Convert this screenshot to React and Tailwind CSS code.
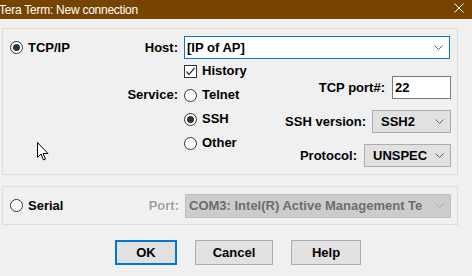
import React from 'react';

// 单选按钮
function Radio({ checked }) {
  return (
    <span className="flex h-[13px] w-[13px] shrink-0 items-center justify-center rounded-full border border-[#333333] bg-white">
      {checked && <span className="h-[7px] w-[7px] rounded-full bg-[#333333]" />}
    </span>
  );
}

function Checkbox({ checked }) {
  return (
    <span className="flex h-[13px] w-[13px] shrink-0 items-center justify-center border border-[#333333] bg-white">
      {checked && (
        <svg width="11" height="11" viewBox="0 0 11 11">
          <path d="M1.5 5.5 L4 8.5 L9.5 2" fill="none" stroke="#333333" strokeWidth="1.2" />
        </svg>
      )}
    </span>
  );
}

function Chevron({ color = '#606060' }) {
  return (
    <svg width="9" height="5" viewBox="0 0 9 5" className="shrink-0">
      <path d="M0.5 0.5 L4.5 4.5 L8.5 0.5" fill="none" stroke={color} />
    </svg>
  );
}

function Select({ value, width }) {
  return (
    <div
      className="flex h-[23px] items-center justify-between border border-[#adadad] bg-[#e1e1e1] pl-[8px] pr-[6px]"
      style={{ width }}
    >
      <span>{value}</span>
      <Chevron />
    </div>
  );
}

function Button({ label, width, primary }) {
  return (
    <div
      className={
        primary
          ? 'flex h-[25px] items-center justify-center border-2 border-[#0078d7] bg-[#e1e1e1]'
          : 'flex h-[25px] items-center justify-center border border-[#adadad] bg-[#e1e1e1]'
      }
      style={{ width }}
    >
      {label}
    </div>
  );
}

export default function App() {
  return (
    <div className="relative h-[276px] w-[472px] overflow-hidden bg-[#f0f0f0] font-['Liberation_Sans',Arial,sans-serif] text-[13px] font-bold text-black">
      {/* 标题栏 */}
      <div className="flex h-[19px] items-center justify-between bg-[#774400] pr-[8px] text-white">
        <span className="-ml-[1px] text-[12px] font-normal tracking-[-0.25px]">Tera Term: New connection</span>
        <svg width="10" height="10" viewBox="0 0 10 10" className="-mt-[3px]">
          <path d="M0.5 0.5 L9.5 9.5 M9.5 0.5 L0.5 9.5" stroke="#ffffff" strokeWidth="1" />
        </svg>
      </div>

      {/* TCP/IP 分组 */}
      <div className="ml-[2px] mt-[9px] flex h-[147px] w-[456px] flex-col border border-[#dcdcdc]">
        <div className="mt-[7px] flex h-[23px] items-center">
          <div className="flex w-[181px] items-center justify-between pl-[7px] pr-[6px]">
            <span className="flex items-center gap-[5px]">
              <Radio checked />
              TCP/IP
            </span>
            <span>Host:</span>
          </div>
          <div className="flex h-[23px] w-[266px] items-center justify-between border border-[#0078d7] bg-white pl-[2px] pr-[6px]">
            <span>[IP of AP]</span>
            <Chevron />
          </div>
        </div>

        <div className="flex flex-1">
          <div className="flex w-[181px] flex-col items-end pr-[6px]">
            <div className="h-[24px]" />
            <div className="flex h-[24px] items-center">Service:</div>
          </div>
          <div className="flex flex-col">
            <div className="flex h-[24px] items-center gap-[5px]">
              <Checkbox checked />
              History
            </div>
            <div className="flex h-[24px] items-center gap-[5px]">
              <Radio />
              Telnet
            </div>
            <div className="flex h-[24px] items-center gap-[5px]">
              <Radio checked />
              SSH
            </div>
            <div className="flex h-[24px] items-center gap-[5px]">
              <Radio />
              Other
            </div>
          </div>
          <div className="flex flex-1 flex-col items-end gap-[11px] pr-[6px] pt-[17px]">
            <div className="flex items-center gap-[7px]">
              <span>TCP port#:</span>
              <div className="flex h-[23px] w-[59px] items-center border border-[#7a7a7a] bg-white pl-[2px]">22</div>
            </div>
            <div className="flex items-center gap-[6px]">
              <span>SSH version:</span>
              <Select value="SSH2" width={79} />
            </div>
            <div className="flex items-center gap-[7px]">
              <span>Protocol:</span>
              <Select value="UNSPEC" width={87} />
            </div>
          </div>
        </div>
      </div>

      {/* Serial 分组 */}
      <div className="ml-[2px] mt-[11px] flex h-[39px] w-[456px] items-center border border-[#dcdcdc] pl-[7px] pr-[6px]">
        <span className="flex items-center gap-[5px]">
          <Radio />
          Serial
        </span>
        <span className="ml-auto mr-[6px] text-[#a0a0a0] [text-shadow:1px_1px_0_#ffffff]">Port:</span>
        <div className="flex h-[24px] w-[266px] items-center justify-between overflow-hidden border border-[#bfbfbf] bg-[#cccccc] pl-[3px] pr-[6px] text-[#6d6d6d]">
          <span className="whitespace-nowrap">COM3: Intel(R) Active Management Te</span>
          <Chevron color="#a8a8a8" />
        </div>
      </div>

      {/* 按钮 */}
      <div className="mt-[15px] flex gap-[18px] pl-[115px]">
        <Button label="OK" width={62} primary />
        <Button label="Cancel" width={78} />
        <Button label="Help" width={70} />
      </div>

      {/* 鼠标指针 */}
      <svg width="13" height="20" viewBox="0 0 13 20" className="absolute left-[37px] top-[142px]">
        <path
          d="M0.5 0.5 L0.5 15.5 L4 12 L6.5 18 L8.5 17 L6 11.5 L11 11.5 Z"
          fill="#ffffff"
          stroke="#000000"
          strokeWidth="1"
          strokeLinejoin="miter"
        />
      </svg>
    </div>
  );
}
